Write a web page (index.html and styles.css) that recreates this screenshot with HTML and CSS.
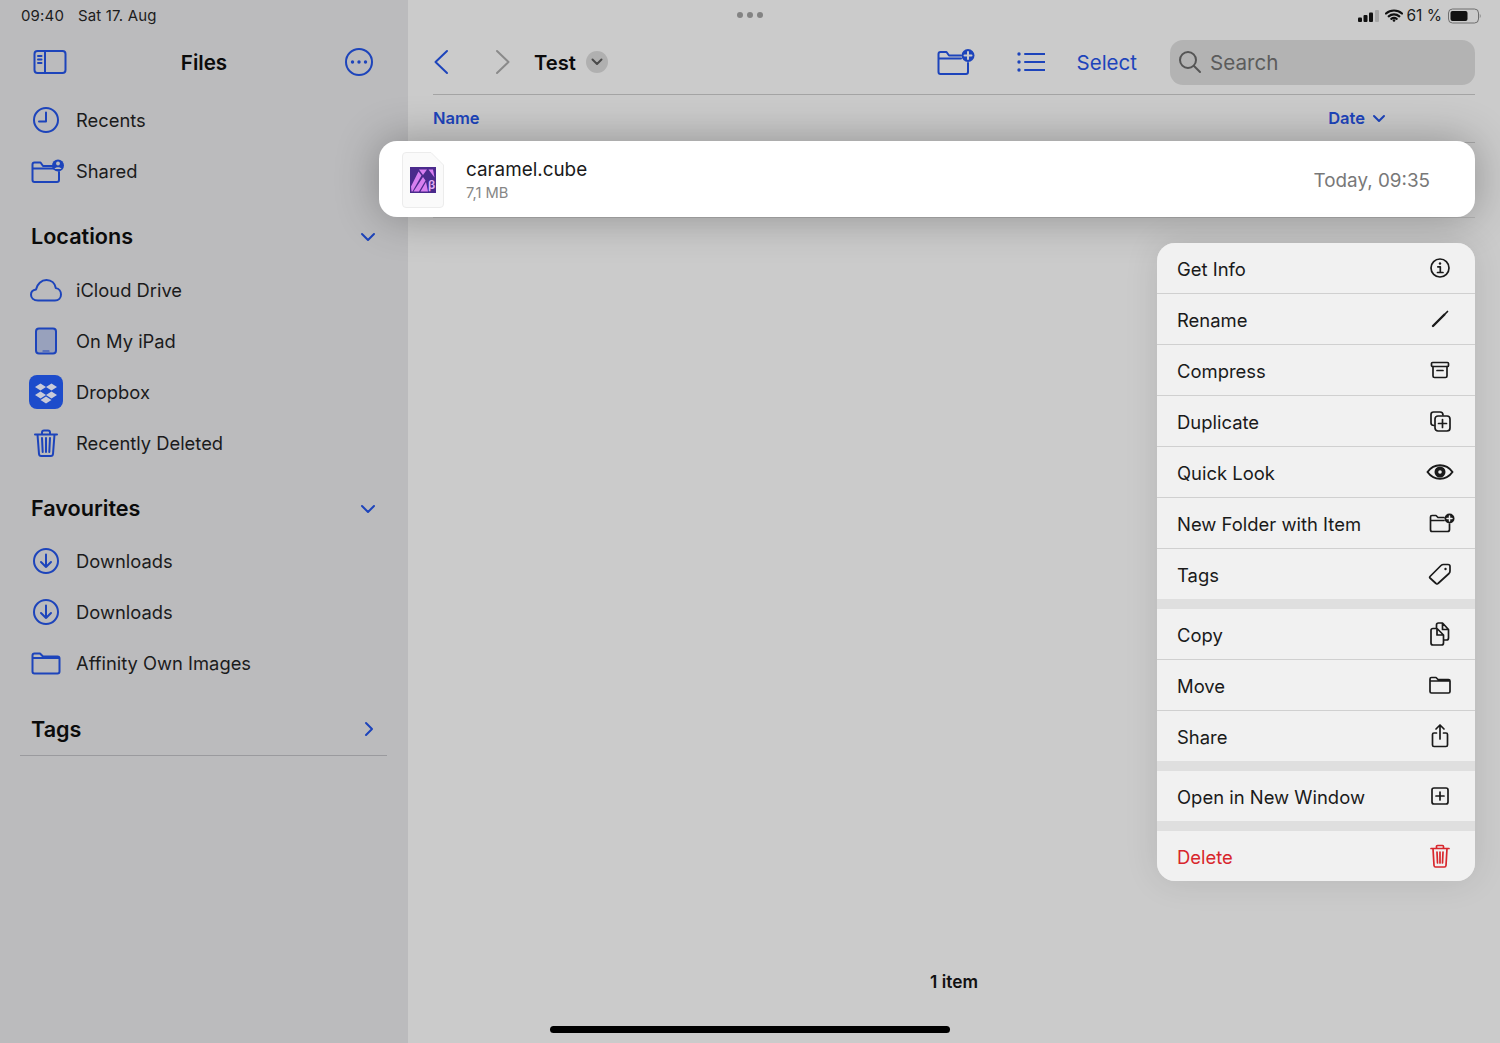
FILE: index.html
```html
<!DOCTYPE html>
<html lang="en">
<head>
<meta charset="utf-8">
<title>Files</title>
<link rel="stylesheet" href="styles.css">
</head>
<body>
<div class="app">
  <aside class="sidebar">
    <div class="status-left"><span>09:40</span><span>Sat 17. Aug</span></div>
    <div class="side-head">
      <svg class="ic-blue" width="34" height="26" viewBox="0 0 34 26"><rect x="1.500" y="2" width="31" height="22" rx="3"/><path d="M12 2v22M5 7h3.500M5 10.500h3.500M5 14h3.500"/></svg>
      <h1>Files</h1>
      <svg class="ic-blue" width="30" height="30" viewBox="0 0 30 30"><circle cx="15" cy="15" r="13"/><circle class="dot" cx="8.500" cy="15" r="1.700"/><circle class="dot" cx="15" cy="15" r="1.700"/><circle class="dot" cx="21.500" cy="15" r="1.700"/></svg>
    </div>
    <ul class="side-list">
      <li><span class="side-ic"><svg class="ic-blue" width="28" height="28" viewBox="0 0 28 28"><circle cx="14" cy="14" r="12"/><path d="M14 6.500v9H7"/></svg></span>Recents</li>
      <li><span class="side-ic"><svg class="ic-blue ic-shared" width="34" height="26" viewBox="0 0 34 26"><path d="M23 8H12L9.500 4.500H3.500Q1.500 4.500 1.500 6.500V22Q1.500 24 3.500 24H26Q28 24 28 22V14M1.500 10.500H23"/><circle class="dot" cx="27" cy="7.500" r="6"/><circle class="cut" cx="27" cy="5.500" r="1.900"/><path class="cut" d="M23.500 11c.8-2.500 6.200-2.500 7 0z"/></svg></span>Shared</li>
    </ul>
    <div class="side-section"><h2>Locations</h2><svg class="ic-blue chev" width="16" height="10" viewBox="0 0 16 10"><path d="M2 2l6 6 6-6"/></svg></div>
    <ul class="side-list">
      <li><span class="side-ic"><svg class="ic-blue" width="32" height="24" viewBox="0 0 32 24"><path d="M8 22.500C3.500 22.500 1 20 1 16.800 1 13.800 3.200 11.800 6 11.500 7 6 11.500 2 16.500 2 21.500 2 25 5.500 25.800 10 29 10.500 31 13.500 31 16.500 31 20 28.500 22.500 25 22.500Z"/></svg></span>iCloud Drive</li>
      <li><span class="side-ic"><svg class="ic-blue" width="24" height="28" viewBox="0 0 24 28"><rect class="tint" x="2" y="1.500" width="20" height="25" rx="3"/><path class="thin" d="M9 24h6"/></svg></span>On My iPad</li>
      <li><span class="side-ic"><svg width="34" height="34" viewBox="0 0 34 34"><rect class="tile" width="34" height="34" rx="8"/><path class="box" d="M11.500 8.500l5.500 3.500-5.500 3.500L6 12zM22.500 8.500L28 12l-5.500 3.500L17 12zM11.500 16.500l5.500 3.500-5.500 3.500L6 20zM22.500 16.500L28 20l-5.500 3.500L17 20zM17 21.500l5.500 3.500-5.500 3.500-5.500-3.500z"/></svg></span>Dropbox</li>
      <li><span class="side-ic"><svg class="ic-blue" width="26" height="30" viewBox="0 0 26 30"><path d="M2 6.500h22M9 6.500V4.500Q9 2.500 11 2.500H15Q17 2.500 17 4.500V6.500M4.500 6.500L6 26Q6.200 28 8.200 28H17.800Q19.800 28 20 26L21.500 6.500M9 10l.7 14M13 10v14M17 10l-.7 14"/></svg></span>Recently Deleted</li>
    </ul>
    <div class="side-section"><h2>Favourites</h2><svg class="ic-blue chev" width="16" height="10" viewBox="0 0 16 10"><path d="M2 2l6 6 6-6"/></svg></div>
    <ul class="side-list">
      <li><span class="side-ic"><svg class="ic-blue" width="28" height="28" viewBox="0 0 28 28"><circle cx="14" cy="14" r="12"/><path d="M14 7.500V20M9 15l5 5 5-5"/></svg></span>Downloads</li>
      <li><span class="side-ic"><svg class="ic-blue" width="28" height="28" viewBox="0 0 28 28"><circle cx="14" cy="14" r="12"/><path d="M14 7.500V20M9 15l5 5 5-5"/></svg></span>Downloads</li>
      <li><span class="side-ic"><svg class="ic-blue" width="30" height="24" viewBox="0 0 30 24"><path d="M1.500 7V4.500Q1.500 2.500 3.500 2.500H9L12 5.500H26.500Q28.500 5.500 28.500 7.500V20.500Q28.500 22.500 26.500 22.500H3.500Q1.500 22.500 1.500 20.500V7H28.500"/></svg></span>Affinity Own Images</li>
    </ul>
    <div class="side-section side-tags"><h2>Tags</h2><svg class="ic-blue chev-r" width="10" height="16" viewBox="0 0 10 16"><path d="M2 2l6 6-6 6"/></svg></div>
  </aside>

  <main class="main">
    <div class="status-main">
      <div class="grabber"><i></i><i></i><i></i></div>
      <div class="status-right">
        <svg width="22" height="12" viewBox="0 0 22 12"><rect class="sb" x="0" y="7.500" width="4" height="4.500" rx="1"/><rect class="sb" x="5.500" y="5" width="4" height="7" rx="1"/><rect class="sb" x="11" y="2.500" width="4" height="9.500" rx="1"/><rect class="sb-off" x="17" y="0" width="4" height="12" rx="1"/></svg>
        <svg class="wifi" width="18" height="13" viewBox="0 0 18 13"><path d="M1 4.500C5.500.5 12.500.5 17 4.500M3.700 7.300c3-2.600 7.600-2.600 10.600 0M6.300 9.900c1.500-1.200 3.900-1.200 5.400 0"/><circle cx="9" cy="11.500" r="1.300"/></svg>
        <span>61 %</span>
        <svg width="33" height="16" viewBox="0 0 33 16"><rect class="bat-o" x=".5" y="1" width="30" height="14" rx="4"/><rect class="sb" x="2.500" y="3" width="17" height="10" rx="2"/><path class="bat-n" d="M31.800 6v4c1-.4 1-3.600 0-4z"/></svg>
      </div>
    </div>
    <div class="toolbar">
      <svg class="ic-blue back" width="16" height="26" viewBox="0 0 16 26"><path d="M14 2L2.500 13 14 24"/></svg>
      <svg class="ic-grey fwd" width="16" height="26" viewBox="0 0 16 26"><path d="M2 2l11.500 11L2 24"/></svg>
      <strong class="crumb">Test</strong>
      <span class="crumb-btn"><svg class="ic-dark" width="12" height="8" viewBox="0 0 12 8"><path d="M1.500 1.500L6 6l4.500-4.500"/></svg></span>
      <div class="spacer"></div>
      <svg class="ic-blue tb-folder" width="38" height="28" viewBox="0 0 38 28"><path d="M24 7.500H12L9.500 4H3.500Q1.500 4 1.500 6V24Q1.500 26 3.500 26H29Q31 26 31 24V15M1.500 10.500H24"/><circle class="dot" cx="31" cy="7.500" r="6.500"/><path class="cut-line" d="M31 4v7M27.500 7.500h7"/></svg>
      <svg class="ic-blue tb-list" width="28" height="20" viewBox="0 0 28 20"><path d="M8 2h19.500M8 10h19.500M8 18h19.500"/><circle class="dot" cx="2" cy="2" r="1.700"/><circle class="dot" cx="2" cy="10" r="1.700"/><circle class="dot" cx="2" cy="18" r="1.700"/></svg>
      <span class="select">Select</span>
      <div class="search">
        <svg class="ic-search" width="24" height="24" viewBox="0 0 24 24"><circle cx="10" cy="10" r="8"/><path d="M16 16l6 6"/></svg>
        <span>Search</span>
      </div>
    </div>
    <div class="columns"><span>Name</span><span class="col-date">Date<svg class="ic-blue" width="14" height="9" viewBox="0 0 14 9"><path d="M2 2l5 5 5-5"/></svg></span></div>
    <div class="rows"></div>
    <div class="count">1 item</div>
  </main>

  <div class="file-row">
    <svg width="44" height="56" viewBox="0 0 44 56" class="doc">
      <path class="doc-p" d="M4 .5H29L41.500 13V52Q41.500 55.500 38 55.500H4Q.5 55.500 .5 52V4Q.5 .5 4 .5Z"/>
      <rect class="logo-bg" x="8" y="15" width="26" height="26"/>
      <path class="logo-f" d="M17 17.500h8l-4 5.500zM26.500 17.500h4.500l1.500 8zM16.500 19.500l3 4-9 16h-1l-.5-5zM21 25l2.500 3.500-6.500 11h-5.500zM24 30l2 9.500h-7.500z"/>
      <text class="beta" x="26" y="37">β</text>
    </svg>
    <div class="file-meta"><div class="file-name">caramel.cube</div><div class="file-size">7,1 MB</div></div>
    <div class="file-date">Today, 09:35</div>
  </div>

  <div class="menu">
    <div class="m-group">
      <div class="m-item">Get Info<span class="m-ic"><svg width="22" height="22" viewBox="0 0 22 22"><circle cx="11" cy="11" r="9"/><path d="M8.800 9.800H11.300V15.500M8.500 15.500H14"/><circle class="fill" cx="11" cy="6.500" r="1.200"/></svg></span></div>
      <div class="m-item">Rename<span class="m-ic"><svg width="22" height="22" viewBox="0 0 22 22"><path class="heavy" d="M4 18L15.500 6.500"/><path d="M16.500 5.500l2-2"/></svg></span></div>
      <div class="m-item">Compress<span class="m-ic"><svg width="22" height="22" viewBox="0 0 22 22"><rect x="2.500" y="3.500" width="17" height="4" rx="1"/><path d="M4 7.500V17Q4 18.500 5.500 18.500H16.500Q18 18.500 18 17V7.500M8 11.500h6"/></svg></span></div>
      <div class="m-item">Duplicate<span class="m-ic"><svg width="22" height="22" viewBox="0 0 22 22"><path d="M5 15.500Q2 15.500 2 13V4.500Q2 2 4.500 2H11Q14 2 14 5"/><rect x="6" y="6" width="15" height="15" rx="3"/><path d="M13.500 9.500v8M9.500 13.500h8"/></svg></span></div>
      <div class="m-item">Quick Look<span class="m-ic"><svg width="28" height="20" viewBox="0 0 28 20"><path class="mid" d="M1.500 10C8 1 20 1 26.500 10 20 19 8 19 1.500 10Z"/><circle class="fill" cx="14" cy="10" r="5.500"/><circle class="hole" cx="14" cy="10" r="1.800"/></svg></span></div>
      <div class="m-item">New Folder with Item<span class="m-ic m-ic-folder"><svg width="26" height="20" viewBox="0 0 26 20"><path d="M15 4.500H9L7 2.500H3Q1.500 2.500 1.500 4V16.500Q1.500 18.500 3 18.500H18.500Q20.500 18.500 20.500 16.500V11M1.500 7.500H15"/><circle class="fill" cx="20.500" cy="5.500" r="5"/><path class="white" d="M20.500 3v5M18 5.500h5"/></svg></span></div>
      <div class="m-item">Tags<span class="m-ic"><svg width="24" height="24" viewBox="0 0 24 24"><path d="M2 14.500L13 3.500Q14 2.500 15.500 2.500H20Q22 2.500 22 4.500V9Q22 10.500 21 11.500L10 21.500Q9 22.500 8 21.500L2 16Q1.200 15.300 2 14.500Z"/><circle class="fill" cx="17.500" cy="7" r="1.200"/></svg></span></div>
    </div>
    <div class="m-group">
      <div class="m-item">Copy<span class="m-ic"><svg width="24" height="26" viewBox="0 0 24 26"><path d="M3 9.500Q3 7.500 5 7.500H9L15.500 14V22Q15.500 24 13.500 24H5Q3 24 3 22ZM9 7.500V14H15.500M8.500 7V4Q8.500 2 10.500 2H14.500L20.500 8.500V17Q20.500 19 18.500 19H15.500M14.500 2V8.500H20.500"/></svg></span></div>
      <div class="m-item">Move<span class="m-ic"><svg width="24" height="20" viewBox="0 0 24 20"><path d="M2 6V4Q2 2.500 3.500 2.500H8L10 4.500H20.500Q22 4.500 22 6V16.500Q22 18 20.500 18H3.500Q2 18 2 16.500V6H22"/></svg></span></div>
      <div class="m-item">Share<span class="m-ic"><svg width="22" height="26" viewBox="0 0 22 26"><path d="M7.500 10H5Q3.500 10 3.500 11.500V22Q3.500 23.500 5 23.500H17Q18.500 23.500 18.500 22V11.500Q18.500 10 17 10H14.500M11 16V2.500M7 6l4-4 4 4"/></svg></span></div>
    </div>
    <div class="m-group">
      <div class="m-item">Open in New Window<span class="m-ic"><svg width="22" height="22" viewBox="0 0 22 22"><rect x="3" y="3" width="16" height="16" rx="2"/><path d="M11 7v8M7 11h8"/></svg></span></div>
    </div>
    <div class="m-group">
      <div class="m-item m-danger">Delete<span class="m-ic"><svg width="22" height="26" viewBox="0 0 22 26"><path d="M2 5.500h18M7.500 5.500V3.500Q7.500 2.500 8.500 2.500H13.500Q14.500 2.500 14.500 3.500V5.500M4 5.500L5 22.500Q5.200 24 6.500 24H15.500Q16.800 24 17 22.500L18 5.500M8 9l.5 11M11 9v11M14 9l-.5 11"/></svg></span></div>
    </div>
  </div>

  <div class="home-bar"></div>
</div>
</body>
</html>
```

FILE: styles.css
```css
* { box-sizing: border-box; }
html, body { margin: 0; height: 100%; }
body { font-family: Inter, "Liberation Sans", sans-serif; color: #1b1b1c; overflow: hidden; }
h1, h2, ul { margin: 0; padding: 0; }
ul { list-style: none; }
svg { display: block; flex: none; }

.ic-blue { fill: none; stroke: #1d44bb; stroke-width: 2; stroke-linecap: round; stroke-linejoin: round; }
.ic-blue .dot { fill: #1d44bb; stroke: none; }
.ic-blue .cut { fill: #bbbbbd; stroke: none; }
.ic-blue .cut-line { stroke: #cbcbcb; stroke-width: 2; }
.ic-blue .thin { stroke-width: 1.200; }
.ic-blue .tint { fill: rgba(29, 68, 187, .22); }
.ic-shared { margin-left: 3px; }
.ic-grey { fill: none; stroke: #8a8a8a; stroke-width: 2; stroke-linecap: round; stroke-linejoin: round; }
.ic-dark { fill: none; stroke: #4a4a4a; stroke-width: 2; stroke-linecap: round; stroke-linejoin: round; }
.ic-search { fill: none; stroke: #555; stroke-width: 2; stroke-linecap: round; }
.tile { fill: #1d4ccb; }
.box { fill: #c9cbd9; }

.app { position: relative; display: flex; width: 1500px; height: 1043px; overflow: hidden; background: #cbcbcb; }

/* sidebar */
.sidebar { width: 408px; flex: none; background: #bbbbbd; }
.status-left { height: 30px; padding-left: 21px; display: flex; align-items: center; gap: 14px; font-size: 15px; letter-spacing: .15px; color: #1c1c1c; }
.side-head { height: 64.500px; padding: 0 34px 0 33px; display: flex; align-items: center; justify-content: space-between; }
.side-head h1 { margin-right: 3px; font-size: 20.600px; font-weight: 600; color: #0b0b0b; }
.side-list li { height: 51px; display: flex; align-items: center; font-size: 18.350px; }
.side-ic { width: 60px; margin-left: 16px; display: flex; justify-content: center; flex: none; }
.side-section { height: 54px; margin-top: 13.500px; padding: 0 32px 0 31px; display: flex; align-items: center; justify-content: space-between; }
.side-section h2 { margin-bottom: 2px; font-size: 21.600px; font-weight: 600; color: #0b0b0b; }
.side-tags { margin-left: 20px; margin-right: 21px; padding: 0 10px 0 11px; border-bottom: 1px solid #9a9a9e; }
.side-tags h2 { margin-bottom: 0; }
.chev-r { margin-right: 3px; }

/* main */
.main { flex: 1; display: flex; flex-direction: column; min-width: 0; }
.status-main { height: 30px; position: relative; }
.grabber { position: absolute; left: 329px; top: 12px; display: flex; gap: 4px; }
.grabber i { width: 6px; height: 6px; border-radius: 50%; background: #838383; }
.status-right { position: absolute; right: 19px; top: 6px; display: flex; align-items: center; gap: 5px; font-size: 15.500px; color: #1c1c1c; }
.status-right span { margin-left: -1px; margin-right: 1px; }
.sb { fill: #111; }
.sb-off { fill: #a8a8a8; }
.wifi { fill: #111; stroke: #111; stroke-width: 2.200; stroke-linecap: round; }
.wifi path { fill: none; }
.wifi circle { stroke: none; }
.bat-o { fill: none; stroke: #6e6e6e; stroke-width: 1; }
.bat-n { fill: #6e6e6e; }

.toolbar { height: 65px; margin: 0 25px; display: flex; align-items: center; border-bottom: 1px solid #a4a4a4; }
.fwd { margin-left: 46px; }
.crumb { margin-left: 23px; font-size: 20.200px; font-weight: 600; color: #0b0b0b; }
.crumb-btn { margin-left: 10px; width: 22px; height: 22px; border-radius: 50%; background: #b0b0b0; display: flex; align-items: center; justify-content: center; }
.spacer { flex: 1; }
.tb-list { margin-left: 42px; }
.select { margin-left: 32px; margin-right: 1px; font-size: 20.500px; color: #1d44bb; }
.search { width: 305px; height: 45px; margin-left: 32px; padding-left: 8px; display: flex; align-items: center; gap: 8px; border-radius: 13px; background: #b3b3b3; font-size: 20.600px; color: #5c5c5c; }

.columns { height: 46px; margin: 0 25px; padding-right: 89px; display: flex; align-items: center; justify-content: space-between; font-size: 16.500px; font-weight: 600; color: #1d44bb; }
.col-date { display: flex; align-items: center; gap: 7px; }
.rows { height: 76px; margin: 1px 25px 0; border-top: 1px solid #a8a8a8; border-bottom: 1px solid #b4b4b4; }
.count { margin-top: 753px; text-align: center; font-size: 17.300px; font-weight: 600; line-height: 22px; color: #111; }

/* selected row */
.file-row { position: absolute; left: 379px; top: 141px; width: 1096px; height: 76px; padding: 0 45px 0 23px; display: flex; align-items: center; background: #fff; border-radius: 18px; box-shadow: 0 0 44px rgba(0, 0, 0, .3); }
.doc { margin-top: 1px; }
.doc-p { fill: #fafafa; stroke: #ececec; }
.logo-bg { fill: #4a2a8c; }
.logo-f { fill: #d77ff0; }
.beta { font-size: 12px; font-weight: 600; fill: #e3b0f5; font-family: Inter, sans-serif; }
.file-meta { margin-left: 20px; flex: 1; }
.file-name { font-size: 18.850px; line-height: 28px; color: #1a1a1a; }
.file-size { font-size: 14.700px; line-height: 18px; color: #868686; }
.file-date { margin-top: 2px; font-size: 18.850px; color: #787878; }

/* context menu */
.menu { position: absolute; left: 1157px; top: 243px; width: 318px; border-radius: 18px; overflow: hidden; display: flex; flex-direction: column; gap: 10px; background: #dfdfdf; box-shadow: 0 0 34px rgba(0, 0, 0, .1); }
.m-group { display: flex; flex-direction: column; gap: 1px; background: #d0d0d0; }
.m-item { height: 50px; padding: 2px 20px 0; display: flex; align-items: center; justify-content: space-between; font-size: 18.450px; color: #1a1a1a; background: #f1f1f1; }
.m-ic { width: 30px; margin-top: -2px; display: flex; justify-content: center; }
.m-ic svg { fill: none; stroke: #1a1a1a; stroke-width: 1.700; stroke-linecap: round; stroke-linejoin: round; }
.m-ic .fill { fill: #1a1a1a; stroke: none; }
.m-ic .hole { fill: #f1f1f1; stroke: none; }
.m-ic .heavy { stroke-width: 2.400; }
.m-ic .white { stroke: #f1f1f1; stroke-width: 1.500; }
.m-ic .mid { stroke-width: 2; }
.m-ic-folder { transform: translateX(2px); }
.m-danger { color: #d8262c; }
.m-danger .m-ic svg { stroke: #d8262c; }

.home-bar { position: absolute; left: 550px; top: 1026px; width: 400px; height: 7px; border-radius: 4px; background: #000; }
```
